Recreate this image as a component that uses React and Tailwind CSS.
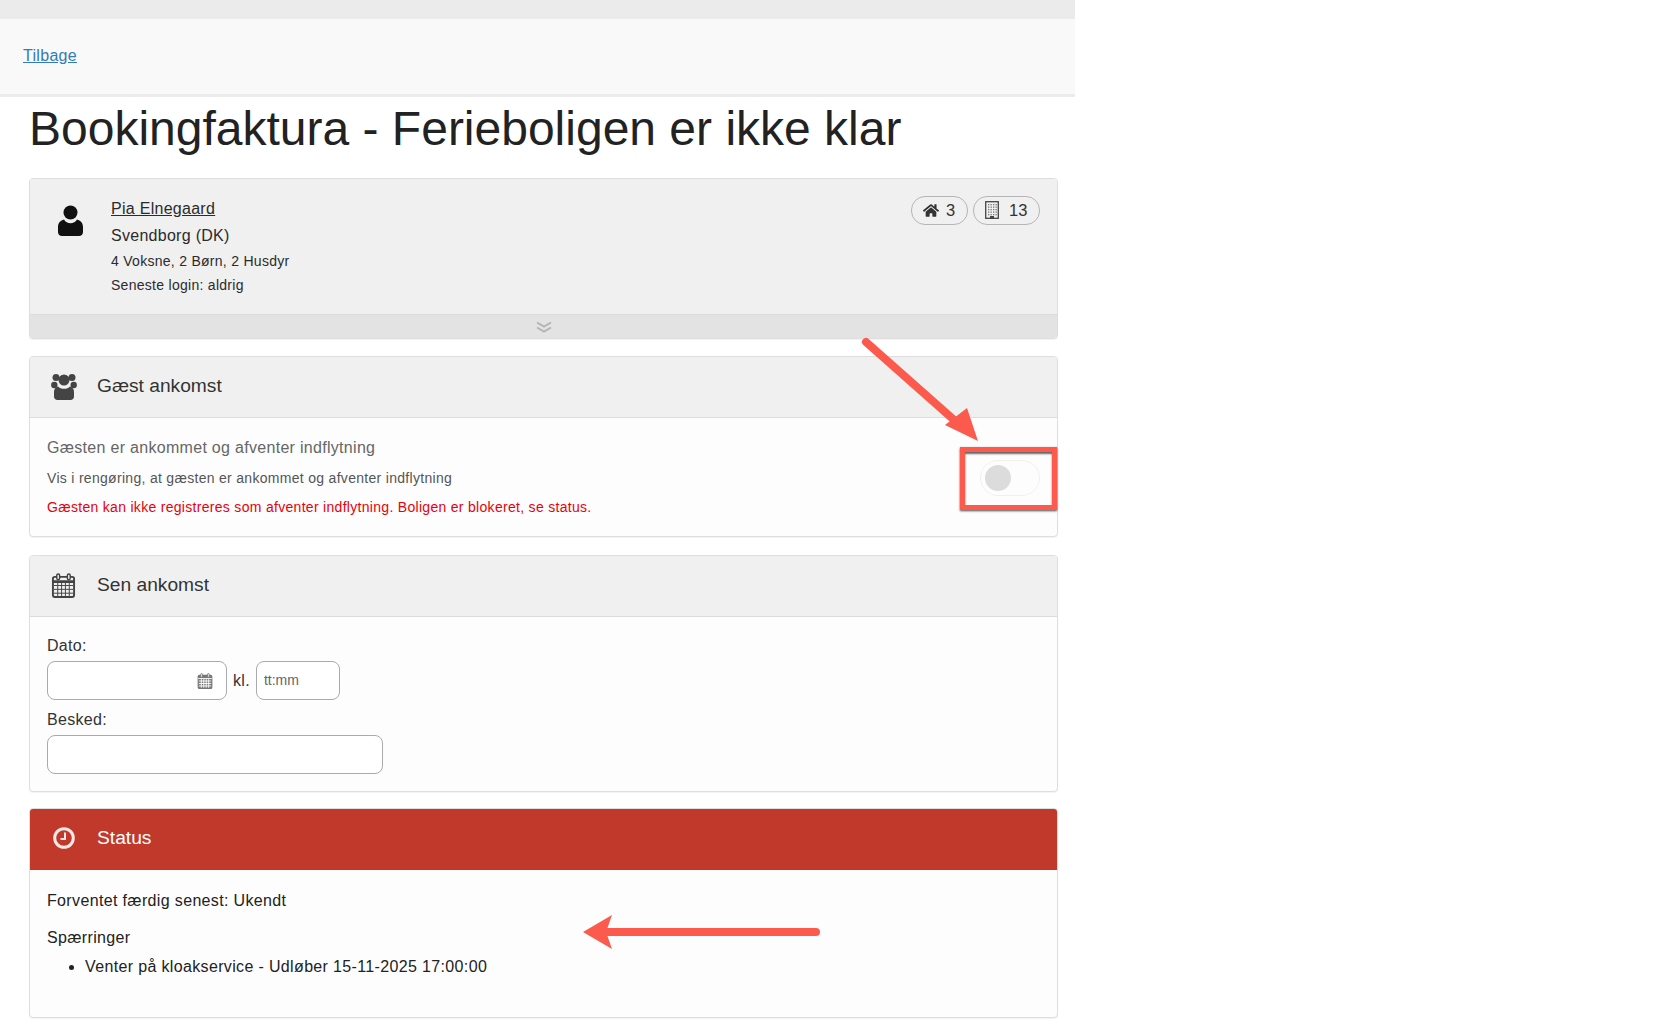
import React from 'react';
import { FaHome } from 'react-icons/fa';

function UserIcon() {
  return (
    <svg viewBox="0 0 25 31" className="h-[31px] w-[25px] text-[#111]" fill="currentColor">
      <circle cx="12.5" cy="7.5" r="7" />
      <path d="M6 14.5c1.500 2.500 3.700 3.700 6.500 3.700s5-1.200 6.500-3.700c3.500.8 6 3.500 6 7.500v5c0 2.500-1.800 4-4 4H4c-2.200 0-4-1.500-4-4v-5c0-4 2.500-6.700 6-7.500z" />
    </svg>
  );
}

function UsersIcon() {
  return (
    <svg viewBox="0 0 26 27" className="h-[27px] w-[26px] shrink-0 text-[#444]" fill="currentColor">
      <circle cx="5" cy="4.500" r="3.500" />
      <circle cx="21" cy="4.500" r="3.500" />
      <circle cx="3.300" cy="12" r="3.200" />
      <circle cx="22.700" cy="12" r="3.200" />
      <circle cx="13" cy="7" r="5.500" />
      <path d="M7 13.500c1.400 1.600 3.500 2.300 6 2.300s4.600-.7 6-2.300c2.600.8 4 2.800 4 5.500v4.500c0 2.200-1.500 3.500-3.500 3.500h-13C4.500 27 3 25.700 3 23.500V19c0-2.700 1.400-4.700 4-5.500z" />
    </svg>
  );
}

function CalendarIcon({ solid, className }) {
  const xs = [7, 11, 15, 19];
  const ys = [13, 17, 21];
  return (
    <svg viewBox="0 0 26 26" className={className} fill="none" stroke="currentColor">
      <rect x="2" y="4" width="22" height="21" rx="2" strokeWidth="2" fill={solid ? 'currentColor' : 'none'} />
      <path d="M2 9h22" strokeWidth={solid ? 1.500 : 3} stroke={solid ? '#fff' : 'currentColor'} />
      {xs.map(x => (
        <path key={x} d={`M${x} 10v14`} strokeWidth={solid ? 1.500 : 1} stroke={solid ? '#fff' : 'currentColor'} />
      ))}
      {ys.map(y => (
        <path key={y} d={`M3 ${y}h20`} strokeWidth={solid ? 1.500 : 1} stroke={solid ? '#fff' : 'currentColor'} />
      ))}
      <rect x="6" y="1" width="3" height="6" rx="1.500" strokeWidth="1.500" fill="#f0f0f0" stroke="currentColor" />
      <rect x="17" y="1" width="3" height="6" rx="1.500" strokeWidth="1.500" fill="#f0f0f0" stroke="currentColor" />
    </svg>
  );
}

function ClockIcon() {
  return (
    <svg viewBox="0 0 22 22" className="h-[22px] w-[22px] text-[#f7e9e7]" fill="none" stroke="currentColor">
      <circle cx="11" cy="11" r="9.300" strokeWidth="3" />
      <path d="M12 5.500V12H7.500" strokeWidth="2" />
    </svg>
  );
}

function BuildingIcon() {
  const cols = [3.500, 6, 8.500, 11];
  const rows = [3, 5.500, 8, 10.500, 13];
  return (
    <svg viewBox="0 0 14 18" className="mr-[10px] h-[18px] w-[14px] text-[#444]" fill="currentColor">
      <rect x="0.700" y="0.700" width="12.600" height="16.600" fill="none" stroke="currentColor" strokeWidth="1.300" />
      {rows.map(y => cols.map(x => <rect key={`${x}-${y}`} x={x - 0.500} y={y} width="1.300" height="1.300" opacity="0.7" />))}
      <rect x="5" y="15" width="4" height="3" />
    </svg>
  );
}

function Chevrons() {
  return (
    <svg viewBox="0 0 16 12" className="h-[12px] w-[16px] text-[#b4b4b4]" fill="none" stroke="currentColor" strokeWidth="2">
      <path d="M1 1.500 8 5.500 15 1.500" />
      <path d="M1 6.500 8 10.500 15 6.500" />
    </svg>
  );
}

function Badge({ icon, count, className }) {
  return (
    <span className={`flex h-[29px] items-center rounded-[14px] border border-[#b5b5b5] pb-[1px] text-[16.500px] text-[#333] ${className}`}>
      {icon}
      {count}
    </span>
  );
}

function PanelHeader({ icon, title, red }) {
  return (
    <div className={`flex h-[61px] items-center border-b pl-[21px] text-[19.200px] ${red ? 'border-[#c0392b] bg-[#c0392b] text-white' : 'border-[#dcdcdc] bg-[#f0f0f0] text-[#333]'}`}>
      <span className="mb-[2px] flex w-[25px] justify-center">{icon}</span>
      <span className="mb-[2px] ml-[21px]">{title}</span>
    </div>
  );
}

function Panel({ children, className }) {
  return (
    <section className={`overflow-hidden rounded-[4px] border border-[#dedede] bg-[#fdfdfd] shadow-[0_1px_1px_rgba(0,0,0,0.05)] ${className}`}>
      {children}
    </section>
  );
}

export default function App() {
  return (
    <div className="relative h-[1026px] w-[1673px] overflow-hidden bg-white font-['Liberation_Sans',Arial,sans-serif] text-[#222]">
      <div className="w-[1075px]">
        <div className="h-[19px] bg-[#ebebeb]" />
        <nav className="flex h-[78px] items-center border-b-[3px] border-[#ececec] bg-[#f9f9f9] pb-[1px] pl-[23px]">
          <a href="#" className="text-[16px] tracking-[0.3px] text-[#337ab7] underline">Tilbage</a>
        </nav>

        <div className="px-[29px] pr-[17px]">
          <h1 className="mt-[1px] h-[80px] text-[48px] leading-[62px] text-[#222]">Bookingfaktura - Ferieboligen er ikke klar</h1>

          <Panel className="mb-[17px] bg-[#f0f0f0]">
            <div className="relative flex h-[135px] bg-[#f0f0f0] pl-[28px] pt-[20px]">
              <div className="mt-[6px]"><UserIcon /></div>
              <div className="ml-[28px] tracking-[0.28px] text-[#2b2b2b]">
                <a href="#" className="block text-[16px] leading-[20px] underline">Pia Elnegaard</a>
                <div className="mt-[7px] text-[16px] leading-[20px]">Svendborg (DK)</div>
                <div className="mt-[5px] text-[14px] leading-[20px]">4 Voksne, 2 Børn, 2 Husdyr</div>
                <div className="mt-[4px] text-[14px] leading-[20px]">Seneste login: aldrig</div>
              </div>
              <div className="absolute right-[17px] top-[17px] flex gap-[5px]">
                <Badge className="w-[57px] pl-[11px]" icon={<FaHome className="mr-[7px] h-[15px] w-[16px] text-[#333]" />} count="3" />
                <Badge className="w-[67px] pl-[11px]" icon={<BuildingIcon />} count="13" />
              </div>
            </div>
            <div className="flex h-[24px] items-center justify-center border-t border-[#dcdcdc] bg-[#e3e3e3]">
              <Chevrons />
            </div>
          </Panel>

          <Panel className="mb-[18px]">
            <PanelHeader icon={<UsersIcon />} title="Gæst ankomst" />
            <div className="relative h-[118px] pl-[17px] pt-[20px] tracking-[0.3px]">
              <div className="text-[16px] leading-[20px] text-[#666]">Gæsten er ankommet og afventer indflytning</div>
              <div className="mt-[10px] text-[14px] leading-[20px] text-[#555]">Vis i rengøring, at gæsten er ankommet og afventer indflytning</div>
              <div className="mt-[9px] text-[14px] leading-[20px] text-[#e8000a]">Gæsten kan ikke registreres som afventer indflytning. Boligen er blokeret, se status.</div>
              <div className="absolute right-[17px] top-[42px] flex h-[36px] w-[60px] items-center rounded-[18px] border border-[#f0f0f0] pl-[4px]">
                <span className="h-[26px] w-[26px] rounded-full bg-[#dcdcdc]" />
              </div>
            </div>
          </Panel>

          <Panel className="mb-[16px]">
            <PanelHeader icon={<CalendarIcon className="h-[25px] w-[25px] text-[#444]" />} title="Sen ankomst" />
            <div className="h-[174px] px-[17px] pt-[19px] tracking-[0.3px]">
              <label className="block text-[16px] leading-[20px] text-[#333]">Dato:</label>
              <div className="mt-[5px] flex items-center">
                <div className="flex h-[39px] w-[180px] items-center justify-end rounded-[8px] border border-[#aaa] bg-white pr-[13px]">
                  <CalendarIcon solid className="h-[16px] w-[16px] text-[#777]" />
                </div>
                <span className="ml-[6px] text-[16px] text-[#333]">kl.</span>
                <div className="ml-[6px] flex h-[39px] w-[84px] items-center rounded-[8px] border border-[#aaa] bg-white pl-[7px] text-[14px] tracking-normal text-[#666]">tt:mm</div>
              </div>
              <label className="mt-[10px] block text-[16px] leading-[20px] text-[#333]">Besked:</label>
              <div className="mt-[5px] h-[39px] w-[336px] rounded-[8px] border border-[#aaa] bg-white" />
            </div>
          </Panel>

          <Panel>
            <PanelHeader red icon={<ClockIcon />} title="Status" />
            <div className="h-[147px] px-[17px] pt-[21px] text-[16px] tracking-[0.35px] text-[#222]">
              <div className="leading-[20px]">Forventet færdig senest: Ukendt</div>
              <div className="mt-[17px] leading-[20px]">Spærringer</div>
              <ul className="mt-[9px] list-disc pl-[38px] leading-[20px]">
                <li>Venter på kloakservice - Udløber 15-11-2025 17:00:00</li>
              </ul>
            </div>
          </Panel>
        </div>
      </div>

      {/* Annotations drawn over the screenshot */}
      <svg className="absolute left-0 top-0" width="1673" height="1026" fill="none">
        <path d="M866 342 L962 427" stroke="#fb5a4c" strokeWidth="8" strokeLinecap="round" />
        <path d="M978 441 L945 425 L967 408 Z" fill="#fb5a4c" />
        <path d="M816 932 L600 932" stroke="#fb5a4c" strokeWidth="8" strokeLinecap="round" />
        <path d="M583 932 L612 915 L606 932 L612 949 Z" fill="#fb5a4c" />
      </svg>
      <div className="absolute left-[960px] top-[447px] h-[63px] w-[97px] border-[5px] border-[#fb5a4c] shadow-[0_1px_2px_rgba(0,0,0,0.7),inset_0_2px_2px_rgba(0,0,0,0.6)]" />
    </div>
  );
}
